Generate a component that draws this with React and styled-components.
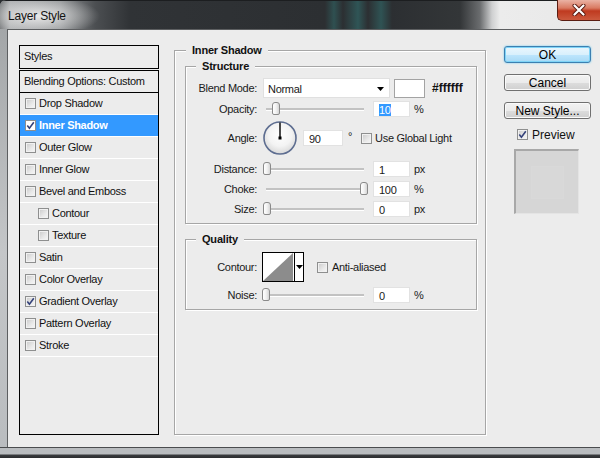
import React from 'react'
import styled, { createGlobalStyle } from 'styled-components'

const GlobalStyle = createGlobalStyle`
  html, body {
    margin: 0;
    padding: 0;
    background: #2b2e31;
  }
  body {
    font-family: "Liberation Sans", Arial, sans-serif;
  }
`

const Window = styled.div`
  width: 600px;
  height: 458px;
  overflow: hidden;
  display: flex;
  flex-direction: column;
  border-top-left-radius: 6px;
  background: linear-gradient(180deg, #9fa2a4 0%, #c4c6c8 55%, #b9bcbf 100%);
`

const TitleBar = styled.div`
  height: 29px;
  flex: none;
  display: flex;
  align-items: flex-start;
  border-top: 1px solid #1c1e20;
  box-sizing: border-box;
  background:
    radial-gradient(ellipse 62px 20px at 38px 15px, rgba(236,236,236,0.95), rgba(236,236,236,0) 100%),
    linear-gradient(90deg, #6f7274 0px, #a9abad 10px, #8f9294 60px, #4c4f52 95px, #303336 130px,
      #2c2f32 325px, #2f5051 334px, #2c2f32 343px, #2f5556 358px, #2c2f32 368px, #2f5354 381px,
      #2c2f32 392px, #333638 460px, #6b6d6f 480px, #cfd0d1 492px, #ececec 500px, #e8e8e8 600px);
`

const Title = styled.div`
  padding: 8px 0 0 8px;
  font-size: 12px;
  letter-spacing: -0.2px;
  color: #141414;
`

const CloseButton = styled.div`
  margin-left: auto;
  margin-top: -1px;
  width: 43px;
  height: 21px;
  box-sizing: border-box;
  border: 1px solid #5a1d12;
  border-top: none;
  border-right: none;
  border-radius: 0 0 0 5px;
  background: linear-gradient(180deg, #eab2a4 0%, #d97a62 40%, #bf3a20 55%, #cc5a3e 100%);
  display: flex;
  align-items: center;
  justify-content: center;
`

const Body = styled.div`
  margin-left: 7px;
  height: 418px;
  flex: none;
  box-sizing: border-box;
  border-left: 1px solid #5d5f61;
  border-top: 1px solid #5d5f61;
  background: #ececec;
  display: flex;
  align-items: flex-start;
  padding: 15px 0 0 11px;
`

const BottomFrame = styled.div`
  flex: 1;
  border-top: 1px solid #4a4c4e;
  background: linear-gradient(180deg, #b9bcbf 0px, #b9bcbf 6px, #3a3c3e 7px, #2b2d2f 100%);
`

/* left column: the list of layer effects */

const StylesColumn = styled.div`
  width: 140px;
  display: flex;
  flex-direction: column;
  gap: 1px;
  font-size: 11px;
  letter-spacing: -0.3px;
  color: #111;
`

const StylesHeader = styled.div`
  height: 24px;
  box-sizing: border-box;
  border: 1px solid #000;
  padding-left: 4px;
  line-height: 21px;
`

const StylesList = styled.div`
  height: 365px;
  box-sizing: border-box;
  border: 1px solid #000;
`

const BlendingRow = styled.div`
  height: 22px;
  box-sizing: border-box;
  border-bottom: 1px solid #000;
  padding-left: 4px;
  line-height: 20px;
`

const LayerItem = styled.div`
  height: 22px;
  box-sizing: border-box;
  border-bottom: 1px solid #fff;
  display: flex;
  align-items: center;
  gap: 3px;
  padding-left: ${p => (p.$indent ? 18 : 5)}px;
  padding-bottom: 1px;
  background: ${p => (p.$selected ? '#3399ff' : 'transparent')};
  color: ${p => (p.$selected ? '#fff' : '#111')};
  font-weight: ${p => (p.$selected ? 'bold' : 'normal')};
`

const Box = styled.span`
  flex: none;
  width: 11px;
  height: 11px;
  box-sizing: border-box;
  border: 1px solid #8e8f8f;
  background: ${p =>
    p.$white ? '#fff' : 'linear-gradient(135deg, #c9c9c9 0%, #e9e9e9 60%, #f7f7f7 100%)'};
  box-shadow: inset 0 0 0 1px ${p => (p.$white ? '#fff' : '#f1f1f1')};
  display: flex;
  align-items: center;
  justify-content: center;
`

function Checkbox({ checked, white }) {
  return (
    <Box $white={white}>
      {checked && (
        <svg width="9" height="9" viewBox="0 0 9 9">
          <path d="M1.3 4.6 L3.4 7.2 L7.8 1.2" fill="none" stroke="#34427a" strokeWidth="1.6" />
        </svg>
      )}
    </Box>
  )
}

/* group boxes */

const Group = styled.fieldset`
  margin: ${p => p.$mt || 0}px 0 0 ${p => p.$ml || 0}px;
  padding: 0;
  min-width: 0;
  width: ${p => p.$w}px;
  height: ${p => p.$h}px;
  box-sizing: border-box;
  border: 1px solid #a6a6a6;
  box-shadow: inset 1px 1px 0 #fff, 1px 1px 0 #fff;
`

const Legend = styled.legend`
  margin-left: ${p => p.$offset}px;
  padding: 0 6px;
  font-size: 11px;
  font-weight: bold;
  letter-spacing: -0.2px;
  line-height: 13px;
  color: #111;
  background: #ececec;
`

const GroupInner = styled.div`
  padding: ${p => p.$pad};
`

const Row = styled.div`
  display: flex;
  align-items: center;
  height: ${p => p.$h}px;
  margin-top: ${p => p.$mt}px;
  font-size: 11px;
  letter-spacing: -0.3px;
  color: #1a1a1a;
`

const Label = styled.div`
  flex: none;
  width: 71px;
  text-align: right;
`

const Select = styled.div`
  margin-left: 6px;
  width: 127px;
  height: 20px;
  box-sizing: border-box;
  background: #fff;
  border: 1px solid #e0e0e0;
  display: flex;
  align-items: center;
  justify-content: space-between;
  padding: 1px 5px 0 4px;
`

const Swatch = styled.div`
  margin-left: 4px;
  width: 31px;
  height: 19px;
  box-sizing: border-box;
  background: #fff;
  border: 1px solid #a3a3a3;
`

const HexText = styled.span`
  margin-left: 7px;
  font-size: 12px;
  font-weight: bold;
  letter-spacing: 0;
  color: #111;
`

const Slider = styled.div`
  margin-left: 6px;
  width: 104px;
  height: 16px;
  box-sizing: border-box;
  padding: 0 3px;
  display: flex;
  align-items: center;
`

const Track = styled.div`
  position: relative;
  flex: 1;
  height: 2px;
  background: #c2c2c2;
  border-bottom: 1px solid #fff;
`

const Thumb = styled.div`
  position: absolute;
  top: -6px;
  width: 8px;
  height: 13px;
  margin-left: -4px;
  box-sizing: border-box;
  border: 1px solid #8a8a8a;
  border-radius: 3px 3px 2px 2px;
  background: linear-gradient(90deg, #ffffff 0%, #f2f2f2 50%, #d6d6d6 100%);
`

const NumberField = styled.div`
  margin-left: ${p => p.$ml || 6}px;
  width: ${p => p.$w || 37}px;
  height: 16px;
  box-sizing: border-box;
  background: #fff;
  border: 1px solid #e2e2e2;
  padding: 1px 0 0 5px;
  display: flex;
  align-items: center;
`

const Highlight = styled.span`
  background: #3399ff;
  color: #fff;
`

const Unit = styled.span`
  margin-left: ${p => p.$ml || 4}px;
`

const Degree = styled.span`
  margin-left: 5px;
  align-self: flex-start;
  margin-top: 9px;
`

const CheckLabel = styled.label`
  display: flex;
  align-items: center;
  gap: ${p => p.$gap || 3}px;
  margin-left: ${p => p.$ml}px;
`

const Dial = styled.svg`
  margin-left: 6px;
  flex: none;
`

const ContourPicker = styled.div`
  margin-left: 5px;
  width: 42px;
  height: 30px;
  box-sizing: border-box;
  border: 1px solid #000;
  background: #fff;
  display: flex;
`

const ContourPreview = styled.div`
  width: 31px;
  border-right: 1px solid #000;
  display: flex;
`

const ContourArrow = styled.div`
  flex: 1;
  display: flex;
  align-items: center;
  justify-content: center;
`

/* right column: buttons + preview */

const ButtonColumn = styled.div`
  margin: 1px 0 0 18px;
  width: 87px;
  display: flex;
  flex-direction: column;
`

const Button = styled.button`
  margin: ${p => p.$mt || 0}px 0 0 0;
  height: 17px;
  padding: 0;
  box-sizing: border-box;
  border: 1px solid ${p => (p.$primary ? '#3c7fb1' : '#707070')};
  border-radius: 3px;
  background: ${p =>
    p.$primary
      ? 'linear-gradient(180deg, #eaf6fd 0%, #d9f0fc 50%, #bee6fd 51%, #a7d9f5 100%)'
      : 'linear-gradient(180deg, #f2f2f2 0%, #ebebeb 50%, #dddddd 51%, #cfcfcf 100%)'};
  box-shadow: ${p => (p.$primary ? 'inset 0 0 0 1px #7fd4f7, 0 0 2px #5ec8f2' : 'inset 0 0 0 1px #fafafa')};
  font-family: "Liberation Sans", Arial, sans-serif;
  font-size: 12px;
  color: #000;
  display: flex;
  align-items: center;
  justify-content: center;
`

const PreviewToggle = styled.label`
  margin-top: 9px;
  height: 13px;
  padding-left: 13px;
  display: flex;
  align-items: center;
  gap: 4px;
  font-size: 12px;
  color: #111;
`

const PreviewBox = styled.div`
  margin: 8px 0 0 10px;
  width: 65px;
  height: 65px;
  box-sizing: border-box;
  background: #d6d6d6;
  border-top: 2px solid #a8a8a8;
  border-left: 2px solid #a8a8a8;
  border-right: 1px solid #e4e4e4;
  border-bottom: 1px solid #e4e4e4;
  display: flex;
  align-items: center;
  justify-content: center;
`

const PreviewSwatch = styled.div`
  width: 31px;
  height: 31px;
  background: #d8d8d8;
  box-shadow: 0 0 0 1px #d9d9d9;
`

const layers = [
  { name: 'Drop Shadow' },
  { name: 'Inner Shadow', checked: true, selected: true },
  { name: 'Outer Glow' },
  { name: 'Inner Glow' },
  { name: 'Bevel and Emboss' },
  { name: 'Contour', indent: true },
  { name: 'Texture', indent: true },
  { name: 'Satin' },
  { name: 'Color Overlay' },
  { name: 'Gradient Overlay', checked: true },
  { name: 'Pattern Overlay' },
  { name: 'Stroke' },
]

function DownArrow() {
  return (
    <svg width="7" height="4" viewBox="0 0 7 4">
      <path d="M0 0 H7 L3.5 4 Z" fill="#000" />
    </svg>
  )
}

function SliderControl({ value }) {
  return (
    <Slider>
      <Track>
        <Thumb style={{ left: `${value}%` }} />
      </Track>
    </Slider>
  )
}

export default function App() {
  return (
    <>
      <GlobalStyle />
      <Window>
        <TitleBar>
          <Title>Layer Style</Title>
          <CloseButton>
            <svg width="14" height="12" viewBox="0 0 14 12">
              <path d="M2.5 1.5 L11.5 10.5 M11.5 1.5 L2.5 10.5" stroke="#5a1a10" strokeWidth="4" strokeLinecap="round" />
              <path d="M2.5 1.5 L11.5 10.5 M11.5 1.5 L2.5 10.5" stroke="#ffffff" strokeWidth="2.2" strokeLinecap="round" />
            </svg>
          </CloseButton>
        </TitleBar>

        <Body>
          <StylesColumn>
            <StylesHeader>Styles</StylesHeader>
            <StylesList>
              <BlendingRow>Blending Options: Custom</BlendingRow>
              {layers.map(l => (
                <LayerItem key={l.name} $indent={l.indent} $selected={l.selected}>
                  <Checkbox checked={l.checked} white={l.selected} />
                  {l.name}
                </LayerItem>
              ))}
            </StylesList>
          </StylesColumn>

          <Group $w={312} $h={391} $ml={15} $mt={-1}>
            <Legend $offset={11}>Inner Shadow</Legend>
            <GroupInner $pad="0 0 0 10px">
              <Group $w={292} $h={164} $mt={3}>
                <Legend $offset={10}>Structure</Legend>
                <GroupInner $pad="5px 0 0 0">
                  <Row $h={20} $mt={0}>
                    <Label>Blend Mode:</Label>
                    <Select>
                      <span>Normal</span>
                      <DownArrow />
                    </Select>
                    <Swatch />
                    <HexText>#ffffff</HexText>
                  </Row>
                  <Row $h={16} $mt={3}>
                    <Label>Opacity:</Label>
                    <SliderControl value={10} />
                    <NumberField><Highlight>10</Highlight></NumberField>
                    <Unit>%</Unit>
                  </Row>
                  <Row $h={34} $mt={4}>
                    <Label>Angle:</Label>
                    <Dial width="34" height="34" viewBox="0 0 34 34">
                      <defs>
                        <radialGradient id="dialFill" cx="50%" cy="40%" r="60%">
                          <stop offset="0%" stopColor="#ffffff" />
                          <stop offset="60%" stopColor="#f3f3f3" />
                          <stop offset="100%" stopColor="#d8d8d8" />
                        </radialGradient>
                      </defs>
                      <circle cx="17" cy="17" r="16" fill="url(#dialFill)" stroke="#5d6d90" strokeWidth="1.6" />
                      <line x1="17" y1="17" x2="17" y2="1.5" stroke="#000" strokeWidth="1.4" />
                      <rect x="15.5" y="15.5" width="3" height="3" fill="#000" />
                    </Dial>
                    <NumberField $w={40}>90</NumberField>
                    <Degree>°</Degree>
                    <CheckLabel $ml={9}>
                      <Checkbox />
                      Use Global Light
                    </CheckLabel>
                  </Row>
                  <Row $h={16} $mt={6}>
                    <Label>Distance:</Label>
                    <SliderControl value={1} />
                    <NumberField>1</NumberField>
                    <Unit>px</Unit>
                  </Row>
                  <Row $h={16} $mt={4}>
                    <Label>Choke:</Label>
                    <SliderControl value={100} />
                    <NumberField>100</NumberField>
                    <Unit>%</Unit>
                  </Row>
                  <Row $h={16} $mt={4}>
                    <Label>Size:</Label>
                    <SliderControl value={1} />
                    <NumberField>0</NumberField>
                    <Unit>px</Unit>
                  </Row>
                </GroupInner>
              </Group>

              <Group $w={292} $h={77} $mt={9}>
                <Legend $offset={10}>Quality</Legend>
                <GroupInner $pad="6px 0 0 0">
                  <Row $h={30} $mt={0}>
                    <Label>Contour:</Label>
                    <ContourPicker>
                      <ContourPreview>
                        <svg width="30" height="28" viewBox="0 0 30 28">
                          <polygon points="0,28 30,0 30,28" fill="#8c8c8c" />
                        </svg>
                      </ContourPreview>
                      <ContourArrow>
                        <DownArrow />
                      </ContourArrow>
                    </ContourPicker>
                    <CheckLabel $ml={13} $gap={4}>
                      <Checkbox />
                      Anti-aliased
                    </CheckLabel>
                  </Row>
                  <Row $h={16} $mt={5}>
                    <Label>Noise:</Label>
                    <SliderControl value={0} />
                    <NumberField>0</NumberField>
                    <Unit>%</Unit>
                  </Row>
                </GroupInner>
              </Group>
            </GroupInner>
          </Group>

          <ButtonColumn>
            <Button $primary>OK</Button>
            <Button $mt={11}>Cancel</Button>
            <Button $mt={11}>New Style...</Button>
            <PreviewToggle>
              <Checkbox checked />
              Preview
            </PreviewToggle>
            <PreviewBox>
              <PreviewSwatch />
            </PreviewBox>
          </ButtonColumn>
        </Body>
        <BottomFrame />
      </Window>
    </>
  )
}
